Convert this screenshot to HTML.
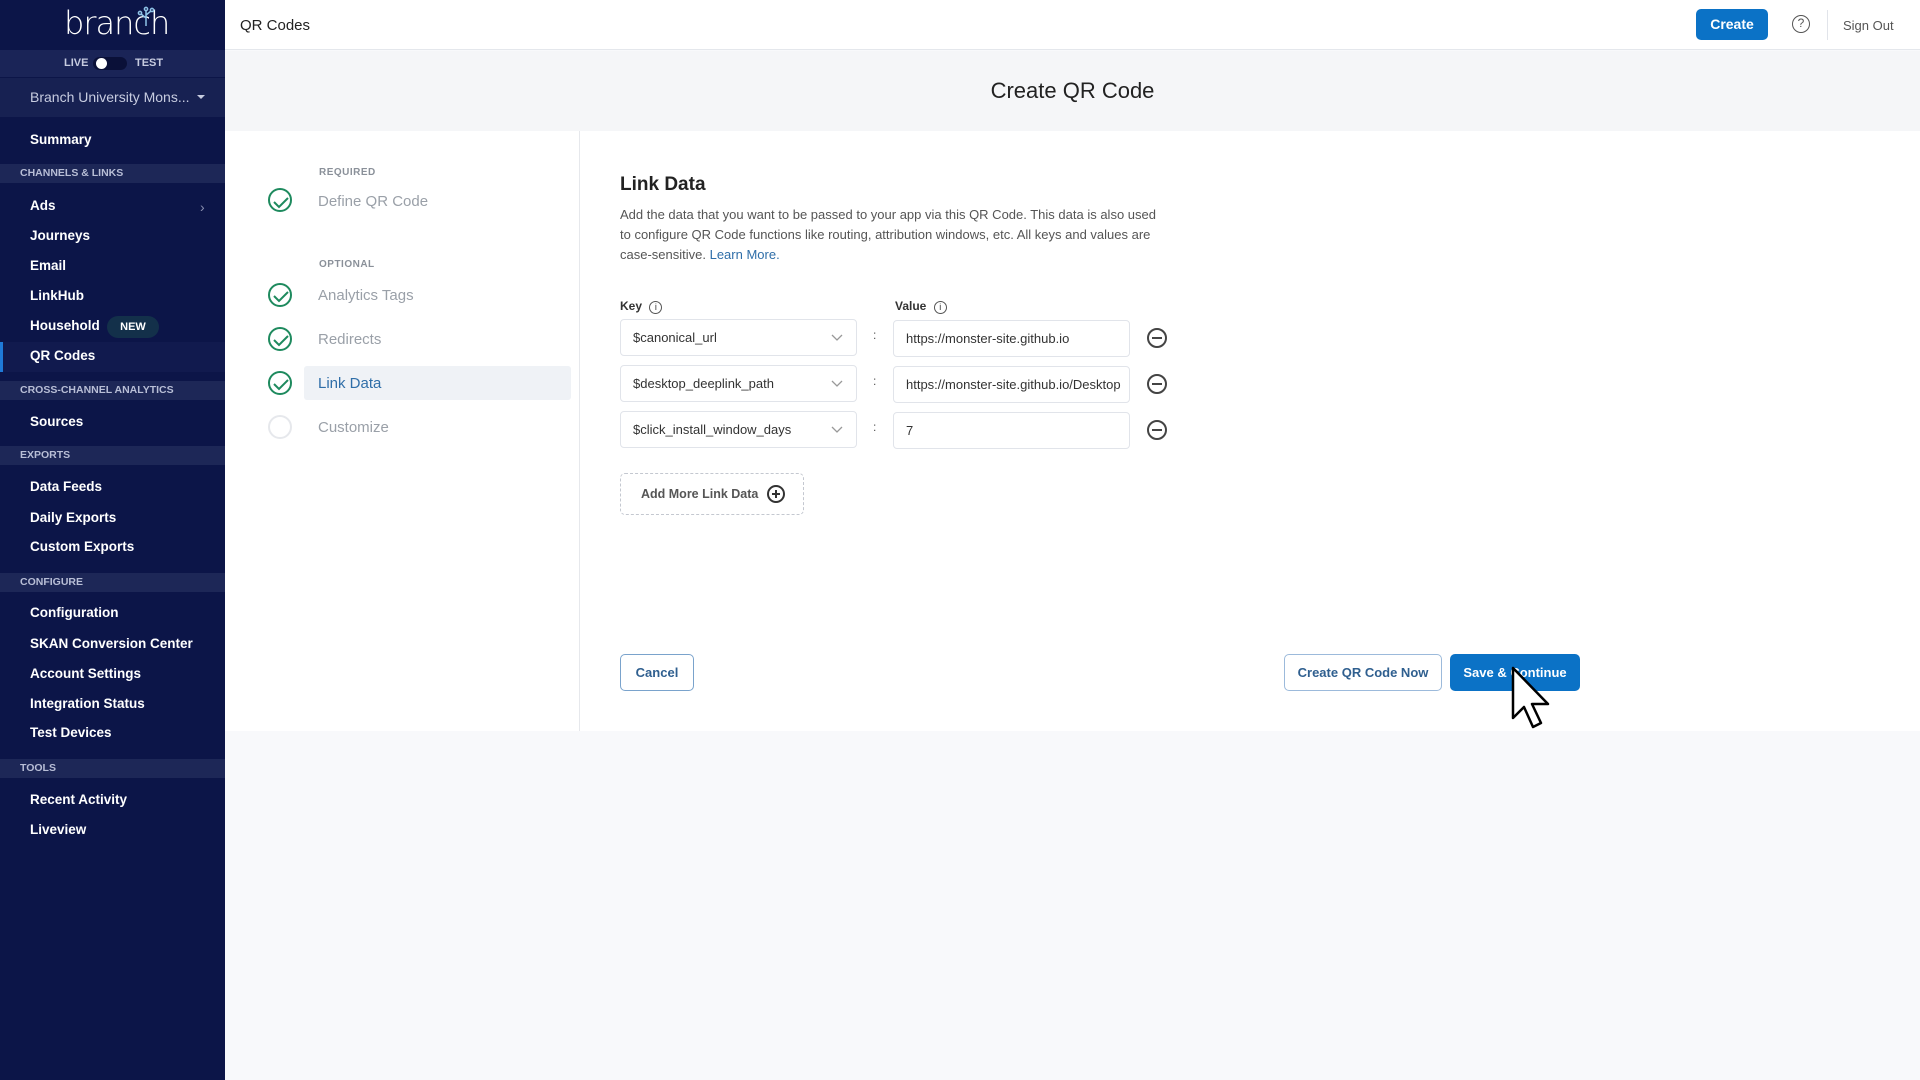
<!DOCTYPE html>
<html><head><meta charset="utf-8"><style>
*{box-sizing:border-box;margin:0;padding:0}
body{width:1920px;height:1080px;overflow:hidden;font-family:"Liberation Sans",sans-serif;background:#f8f9fb;position:relative}
.sb{position:absolute;left:0;top:0;width:225px;height:1080px;background:#0c1548;color:#fff}
.a{position:absolute}
.sb .it{position:absolute;left:30px;font-size:13.5px;font-weight:bold;color:#fff}
.sb .hd{position:absolute;left:0;width:225px;height:19px;background:#1d2757;font-size:10.5px;font-weight:bold;color:#b8bed6;padding-left:20px;line-height:19px}
.top{position:absolute;left:225px;top:0;width:1695px;height:50px;background:#fff;border-bottom:1px solid #e4e7ec}
.band{position:absolute;left:225px;top:51px;width:1695px;height:80px;background:#f5f6f8}
.main{position:absolute;left:225px;top:131px;width:1695px;height:600px;background:#fff}
.step{position:absolute;font-size:15px;color:#9aa0a8}
.circ{position:absolute;left:268px;width:24px;height:24px;border:2px solid #1e8a5e;border-radius:50%}
.lbl{position:absolute;font-size:10px;font-weight:bold;color:#8a9099;letter-spacing:.5px}
.inp{position:absolute;height:37px;border:1px solid #e1e4ea;border-radius:4px;font-size:13px;color:#333;line-height:35px;padding-left:12px;background:#fff;overflow:hidden;white-space:nowrap}
.minus{position:absolute;left:1147px;width:20px;height:20px;border:2px solid #444;border-radius:50%}
.minus:after{content:"";position:absolute;left:3px;top:7px;width:10px;height:2px;background:#444}
.btn{position:absolute;border-radius:5px;font-size:13px;font-weight:bold;text-align:center}
</style></head><body>
<div class="sb">
 <div class="a" style="left:64px;top:4px;font-size:32px;color:#fff;font-family:'DejaVu Sans',sans-serif;font-weight:300;letter-spacing:-1px">branch</div>
 <svg class="a" style="left:136px;top:6px" width="20" height="20"><g fill="none" stroke="#8fc4e8" stroke-width="1.5"><path d="M10 20V4M10 12l-5-4M10 9l5-4"/><circle cx="10" cy="3" r="1.6"/><circle cx="4" cy="7" r="1.6"/><circle cx="16" cy="4" r="1.6"/></g></svg>
 <div class="a" style="left:0;top:50px;width:225px;height:27px;background:#1a2457"></div>
 <div class="a" style="left:64px;top:57px;font-size:11px;font-weight:bold;color:#c7cce0">LIVE</div>
 <div class="a" style="left:93px;top:57px;width:34px;height:13px;border-radius:7px;background:#0a1038"></div>
 <div class="a" style="left:96px;top:58px;width:11px;height:11px;border-radius:50%;background:#fff"></div>
 <div class="a" style="left:135px;top:57px;font-size:11px;font-weight:bold;color:#c7cce0">TEST</div>
 <div class="a" style="left:0;top:78px;width:225px;height:39px;background:#172152"></div>
 <div class="a" style="left:30px;top:89px;font-size:14px;color:#c7cce0">Branch University Mons...</div>
 <div class="a" style="left:197px;top:95px;border:4px solid transparent;border-top-color:#c7cce0"></div>
 <div class="it" style="top:132px">Summary</div>
 <div class="hd" style="top:164px">CHANNELS &amp; LINKS</div>
 <div class="it" style="top:198px">Ads</div>
 <div class="a" style="left:200px;top:199px;color:#8a90b0;font-size:14px">›</div>
 <div class="it" style="top:228px">Journeys</div>
 <div class="it" style="top:258px">Email</div>
 <div class="it" style="top:288px">LinkHub</div>
 <div class="it" style="top:318px">Household</div>
 <div class="a" style="left:107px;top:316px;width:52px;height:22px;border-radius:11px;background:#13304a;font-size:11px;font-weight:bold;text-align:center;line-height:22px">NEW</div>
 <div class="a" style="left:0;top:342px;width:225px;height:30px;background:#111a4e;border-left:3px solid #1f7ad8"></div>
 <div class="it" style="top:348px">QR Codes</div>
 <div class="hd" style="top:381px">CROSS-CHANNEL ANALYTICS</div>
 <div class="it" style="top:414px">Sources</div>
 <div class="hd" style="top:446px">EXPORTS</div>
 <div class="it" style="top:479px">Data Feeds</div>
 <div class="it" style="top:510px">Daily Exports</div>
 <div class="it" style="top:539px">Custom Exports</div>
 <div class="hd" style="top:573px">CONFIGURE</div>
 <div class="it" style="top:605px">Configuration</div>
 <div class="it" style="top:636px">SKAN Conversion Center</div>
 <div class="it" style="top:666px">Account Settings</div>
 <div class="it" style="top:696px">Integration Status</div>
 <div class="it" style="top:725px">Test Devices</div>
 <div class="hd" style="top:759px">TOOLS</div>
 <div class="it" style="top:792px">Recent Activity</div>
 <div class="it" style="top:822px">Liveview</div>
</div>
<div class="top">
 <div class="a" style="left:15px;top:17px;font-size:15px;color:#222">QR Codes</div>
 <div class="btn" style="left:1471px;top:9px;width:72px;height:31px;background:#0b72c6;color:#fff;line-height:31px;font-size:14px">Create</div>
 <div class="a" style="left:1567px;top:15px;width:18px;height:18px;border:1.5px solid #555;border-radius:50%;font-size:12px;text-align:center;line-height:15px;color:#555">?</div>
 <div class="a" style="left:1602px;top:10px;width:1px;height:30px;background:#e1e4ea"></div>
 <div class="a" style="left:1618px;top:18px;font-size:13px;color:#555">Sign Out</div>
</div>
<div class="band"><div class="a" style="left:0;width:1695px;top:27px;text-align:center;font-size:22px;color:#222">Create QR Code</div></div>
<div class="main">
 <div class="a" style="left:354px;top:0;width:1px;height:600px;background:#e6e8ec"></div>
 <div class="lbl" style="left:94px;top:36px">REQUIRED</div>
 <div class="circ" style="top:57px;left:43px"></div>
 <div class="step" style="left:93px;top:62px">Define QR Code</div>
 <div class="lbl" style="left:94px;top:128px">OPTIONAL</div>
 <div class="circ" style="top:152px;left:43px"></div>
 <div class="step" style="left:93px;top:156px">Analytics Tags</div>
 <div class="circ" style="top:196px;left:43px"></div>
 <div class="step" style="left:93px;top:200px">Redirects</div>
 <div class="a" style="left:79px;top:235px;width:267px;height:34px;background:#eff2f6;border-radius:3px"></div>
 <div class="circ" style="top:240px;left:43px"></div>
 <div class="step" style="left:93px;top:244px;color:#2f6ea8">Link Data</div>
 <div class="circ" style="top:284px;left:43px;border-color:#e6e8ec"></div>
 <div class="step" style="left:93px;top:288px">Customize</div>
</div>
<svg class="a" style="left:0;top:0" width="1920" height="1080">
 <g fill="none" stroke="#1e8a5e" stroke-width="2"><path d="M274 202l5 5 9-9"/><path d="M274 296l5 5 9-9"/><path d="M274 340l5 5 9-9"/><path d="M274 384l5 5 9-9"/></g>
</svg>
<div class="a" style="left:620px;top:174px;font-size:19px;color:#222;font-weight:bold">Link Data</div>
<div class="a" style="left:620px;top:205px;width:545px;font-size:13px;line-height:20px;color:#555">Add the data that you want to be passed to your app via this QR Code. This data is also used to configure QR Code functions like routing, attribution windows, etc. All keys and values are case-sensitive. <span style="color:#2f6ea8">Learn More.</span></div>
<div class="a" style="left:620px;top:299px;font-size:12px;font-weight:bold;color:#333">Key <span style="display:inline-block;width:13px;height:13px;border:1px solid #555;border-radius:50%;font-size:9px;text-align:center;line-height:11px;margin-left:4px;font-weight:normal">i</span></div>
<div class="a" style="left:895px;top:299px;font-size:12px;font-weight:bold;color:#333">Value <span style="display:inline-block;width:13px;height:13px;border:1px solid #555;border-radius:50%;font-size:9px;text-align:center;line-height:11px;margin-left:4px;font-weight:normal">i</span></div>
<div class="inp" style="left:620px;top:319px;width:237px">$canonical_url</div>
<div class="inp" style="left:620px;top:365px;width:237px">$desktop_deeplink_path</div>
<div class="inp" style="left:620px;top:411px;width:237px">$click_install_window_days</div>
<svg class="a" style="left:0;top:0" width="1920" height="1080"><g fill="none" stroke="#999" stroke-width="1.3"><path d="M832 335l5 5 5-5"/><path d="M832 381l5 5 5-5"/><path d="M832 427l5 5 5-5"/></g>
<g fill="none" stroke="#333" stroke-width="2"><circle cx="776" cy="494" r="8"/><path d="M772 494h8M776 490v8"/></g></svg>
<div class="a" style="left:873px;top:328px;font-size:12px;color:#555">:</div>
<div class="a" style="left:873px;top:374px;font-size:12px;color:#555">:</div>
<div class="a" style="left:873px;top:420px;font-size:12px;color:#555">:</div>
<div class="inp" style="left:893px;top:320px;width:237px">https://monster-site.github.io</div>
<div class="inp" style="left:893px;top:366px;width:237px">https://monster-site.github.io/Desktop</div>
<div class="inp" style="left:893px;top:412px;width:237px">7</div>
<div class="minus" style="top:328px"></div>
<div class="minus" style="top:374px"></div>
<div class="minus" style="top:420px"></div>
<div class="a" style="left:620px;top:473px;width:184px;height:42px;border:1px dashed #c4c8d0;border-radius:5px;font-size:12.5px;font-weight:bold;color:#555;line-height:40px;padding-left:20px">Add More Link Data</div>
<div class="btn" style="left:620px;top:654px;width:74px;height:37px;border:1px solid #7aa3cc;color:#2f5f8f;line-height:35px;background:#fff">Cancel</div>
<div class="btn" style="left:1284px;top:654px;width:158px;height:37px;border:1px solid #9cbadb;color:#2f5f8f;line-height:35px;background:#fff">Create QR Code Now</div>
<div class="btn" style="left:1450px;top:654px;width:130px;height:37px;background:#0b72c6;color:#fff;line-height:37px">Save &amp; Continue</div>
<svg class="a" style="left:1510px;top:666px" width="50" height="66"><path d="M3 2v50l11-11 9 20 8-4-9-19h16z" fill="#fff" stroke="#000" stroke-width="2.5" stroke-linejoin="round"/></svg>
</body></html>
